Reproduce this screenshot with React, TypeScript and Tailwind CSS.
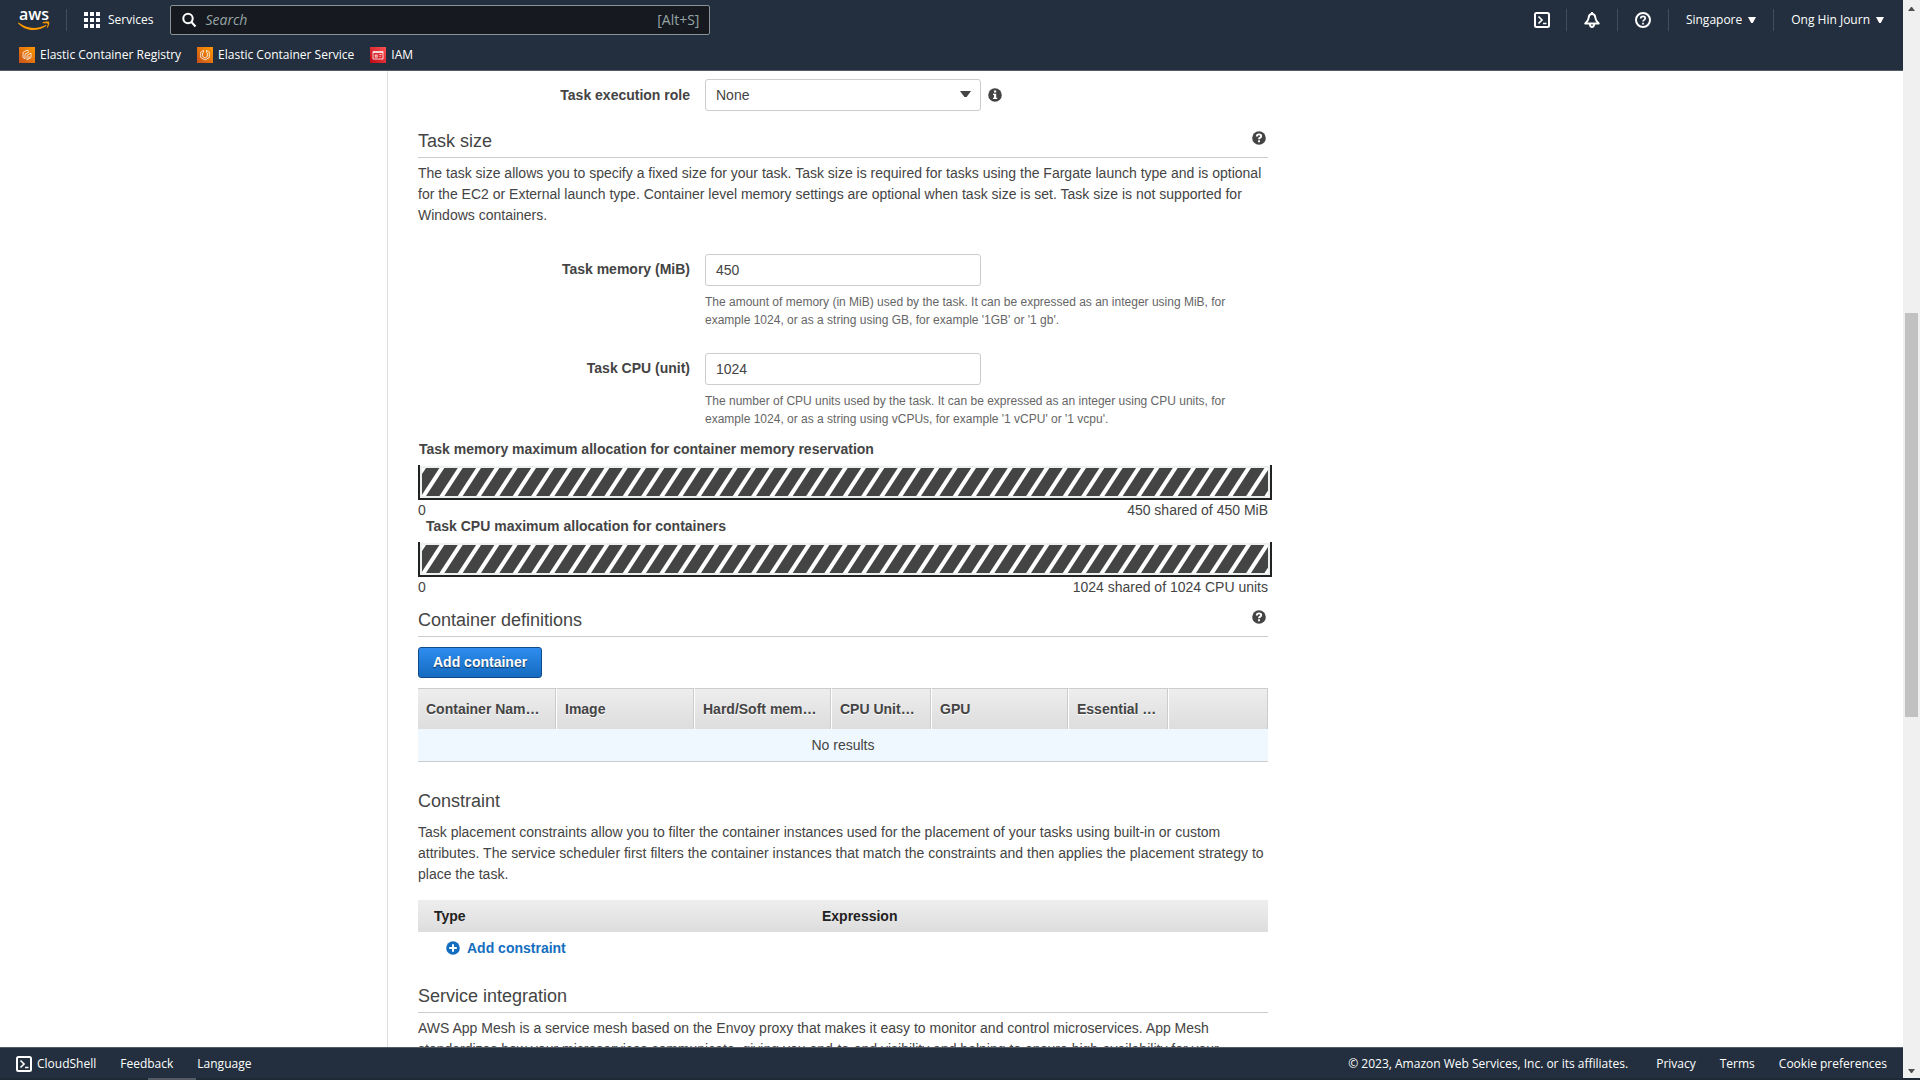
import React from "react";

const body = "text-sm leading-[21px] text-[#444]";

function Caret({ className }: { className: string }) {
  return (
    <svg viewBox="0 0 8 6" preserveAspectRatio="none" className={className} aria-hidden="true">
      <path d="M0 0h8L4.800 6H3.200z" fill="currentColor" />
    </svg>
  );
}

function AwsLogo() {
  return (
    <svg viewBox="0 0 32 32" className="size-8" role="img" aria-label="aws">
      <text x="16" y="20" textAnchor="middle" fontSize="16" fontWeight="600" fill="#fff" fontFamily="'Open Sans', sans-serif">
        aws
      </text>
      <g transform="translate(0 9)">
        <path d="M.6 13.600C5 17.200 10.300 19 15.600 19c4 0 8.300-1 12-2.900.6-.3 1.100.4.5.8C24.600 19.700 19.900 21 15.500 21 9.600 21 4.200 18.600.2 14.400c-.4-.4 0-1 .4-.8z" fill="#f90" />
        <path d="M24.600 13.500c1.500-1 5.900-1.400 6.500-.6.6.8-.2 4.600-2.100 6.200-.3.2-.6.1-.4-.2.500-1.100 1.500-3.700 1.100-4.200-.5-.6-3.500-.5-4.900-.5-.4 0-.5-.4-.2-.7z" fill="#f90" />
      </g>
    </svg>
  );
}

function AppsIcon() {
  return (
    <svg viewBox="0 0 16 16" className="size-4" fill="#fff" aria-hidden="true">
      {[0, 6, 12].map((y) => [0, 6, 12].map((x) => <rect key={`${x}-${y}`} x={x} y={y} width="4" height="4" />))}
    </svg>
  );
}

function SearchIcon() {
  return (
    <svg viewBox="0 0 16 16" className="size-4" fill="none" stroke="#fff" strokeWidth="2" aria-hidden="true">
      <circle cx="7" cy="6.500" r="4.700" />
      <path d="M10.400 10 14.500 14.500" />
    </svg>
  );
}

function ShellIcon() {
  return (
    <svg viewBox="0 0 16 16" className="size-4" fill="none" stroke="#fff" strokeWidth="2" aria-hidden="true">
      <rect x="1" y="1" width="14" height="14" rx="1.500" />
      <path d="m4.500 4.500 3.500 3.500-3.500 3.500M9 11.500h3.500" strokeWidth="1.700" />
    </svg>
  );
}

function BellIcon() {
  return (
    <svg viewBox="0 0 16 16" className="size-4" fill="none" stroke="#fff" strokeWidth="2" strokeLinejoin="round" aria-hidden="true">
      <path d="M8 2C5.800 2 4.800 3.500 4.600 6 4.400 8.500 3 10 1.300 11.500h13.400C13 10 11.600 8.500 11.400 6 11.200 3.500 10.200 2 8 2z" />
      <path d="M5.800 12c.2 1.900 1 3 2.200 3s2-1.100 2.200-3" />
      <path d="M8 0v2" />
    </svg>
  );
}

function HelpIcon() {
  return (
    <svg viewBox="0 0 16 16" className="size-4" fill="none" stroke="#fff" strokeWidth="2" aria-hidden="true">
      <circle cx="8" cy="8" r="7" />
      <path d="M5.700 6.500C5.700 5 6.700 4.300 8 4.300s2.300.8 2.300 2c0 1.500-2.300 1.600-2.300 3.300M8 10.700v1.700" strokeWidth="1.700" />
    </svg>
  );
}

function ServiceIcon({ kind }: { kind: "ecr" | "ecs" | "iam" }) {
  const red = kind === "iam";
  return (
    <svg viewBox="0 0 16 16" className="size-4" fill="none" stroke="#fff" strokeWidth=".8" aria-hidden="true">
      <defs>
        <linearGradient id={`g-${kind}`} x1="0" y1="1" x2="1" y2="0">
          <stop offset="0" stopColor={red ? "#bd0816" : "#c8511b"} />
          <stop offset="1" stopColor={red ? "#ff5252" : "#f90"} />
        </linearGradient>
      </defs>
      <rect width="16" height="16" fill={`url(#g-${kind})`} stroke="none" />
      {kind === "ecr" && (
        <path d="M10 4.300 8 3.200 4 5.500v5l2 1.200V7.200l4-2.300M8 12.800V8.300l4-2.300v4.500l-4 2.300M10 11.500V9" />
      )}
      {kind === "ecs" && (
        <path d="M6.500 3.300 3.700 5.200v5.300L8 13l4.300-2.500V5.200L9.500 3.300M6.500 3.300v2L5.600 6v3.500L8 11l2.400-1.500V6l-.9-.7v-2" />
      )}
      {kind === "iam" && <path d="M3 4.500h10v7.500H3zM3 5.500h10M5.200 8h2v2.200h-2zM9.500 7.500h2M9.500 9.500h1" />}
    </svg>
  );
}

function Disc({ kind, className }: { kind: "info" | "help" | "plus"; className: string }) {
  return (
    <svg viewBox="0 0 14 14" className={className} aria-hidden="true">
      <circle cx="7" cy="7" r="6.800" fill="currentColor" />
      {kind === "info" && <path d="M6 2.500h2.200v1.900H6zM5 5.700h3.200v4h1V11H5V9.700h1V7H5z" fill="#fff" />}
      {kind === "help" && (
        <path d="M4.800 5.500C4.800 4.200 5.700 3.400 7 3.400s2.200.7 2.200 1.800c0 1.500-2.200 1.400-2.200 3M7 9.300v1.900" fill="none" stroke="#fff" strokeWidth="1.900" />
      )}
      {kind === "plus" && <path d="M7 3.200v7.600M3.200 7h7.600" stroke="#fff" strokeWidth="2" />}
    </svg>
  );
}

const Sep = () => <span className="h-[22px] w-px bg-[#414d5c]" />;

function Header() {
  return (
    <header className="border-b border-[#545b64] bg-[#232f3e] font-['Open_Sans',sans-serif] text-xs font-medium text-white">
      <div className="flex h-10 items-center">
        <a href="#home" className="ml-[18px] pb-2"><AwsLogo /></a>
        <span className="ml-4 flex"><Sep /></span>
        <button className="ml-[17px] flex items-center gap-2"><AppsIcon />Services</button>
        <label className="ml-[17px] flex h-[30px] w-[540px] items-center rounded-xs border border-[#879596] bg-[#16191f] pr-[10px] pl-[10px] text-sm font-normal text-[#95a5a6]">
          <SearchIcon />
          <input aria-label="Search" placeholder="Search" className="ml-2 min-w-0 flex-1 italic outline-none placeholder:text-[#95a5a6]" />
          <span>[Alt+S]</span>
        </label>
        <div className="ml-auto flex items-center">
          <button aria-label="CloudShell" className="mr-4"><ShellIcon /></button>
          <Sep />
          <button aria-label="Notifications" className="mx-[17px]"><BellIcon /></button>
          <Sep />
          <button aria-label="Help" className="mx-[17px]"><HelpIcon /></button>
          <Sep />
          <button className="mx-[17px] flex items-center gap-[6px]">Singapore<Caret className="h-[6px] w-2" /></button>
          <Sep />
          <button className="mr-[19px] ml-[17px] flex items-center gap-[6px]">Ong Hin Journ<Caret className="h-[6px] w-2" /></button>
        </div>
      </div>
      <nav className="flex h-[30px] items-center gap-4 pl-[19px]">
        <a href="#ecr" className="flex items-center gap-[5px]"><ServiceIcon kind="ecr" />Elastic Container Registry</a>
        <a href="#ecs" className="flex items-center gap-[5px]"><ServiceIcon kind="ecs" />Elastic Container Service</a>
        <a href="#iam" className="flex items-center gap-[5px]"><ServiceIcon kind="iam" />IAM</a>
      </nav>
    </header>
  );
}

function SectionTitle({ children, help = false }: { children: React.ReactNode; help?: boolean }) {
  return (
    <div className="flex h-8 items-start justify-between border-b border-[#ccc] pr-[2px] text-[#444]">
      <h2 className="text-lg leading-[30px]">{children}</h2>
      {help && (
        <button aria-label={`Help: ${children}`} className="mt-[5px]"><Disc kind="help" className="size-[14px]" /></button>
      )}
    </div>
  );
}

function Field({ id, label, value, help }: { id: string; label: string; value: string; help: string }) {
  return (
    <div className="flex">
      <label htmlFor={id} className="w-[272px] text-right text-sm leading-[30px] font-bold text-[#444]">{label}</label>
      <div className="ml-[15px] flex-1">
        <input id={id} defaultValue={value} className="h-8 w-[276px] rounded-[3px] border border-[#ccc] px-[10px] text-sm text-[#444]" />
        <p className="mt-[7px] max-w-[540px] text-xs leading-[18px] text-[#666]">{help}</p>
      </div>
    </div>
  );
}

function Allocation({ id, label, total }: { id: string; label: React.ReactNode; total: string }) {
  return (
    <div className="text-sm text-[#444]">
      {label}
      <div className="-mr-1 h-[35px] border-x-2 border-b-2 border-[#222] pt-px">
        <div className="h-8 border-2 border-[#ecf0f1]">
          <svg className="block h-full w-full" aria-hidden="true">
            <defs>
              <pattern id={id} width="55" height="28" patternUnits="userSpaceOnUse">
                <rect width="55" height="28" fill="#444" />
                <g fill="#fff">
                  <path d="M-.9 0h4.900L-14.300 28h-4.900z" />
                  <path d="M17.430 0h4.900L4 28H-.9z" />
                  <path d="M35.770 0h4.900L22.330 28h-4.900z" />
                  <path d="M54.100 0H59L40.670 28h-4.900z" />
                  <path d="M72.430 0h4.900L59 28h-4.900z" />
                </g>
              </pattern>
            </defs>
            <rect width="100%" height="100%" fill={`url(#${id})`} />
          </svg>
        </div>
      </div>
      <div className="flex justify-between leading-5"><span>0</span><span>{total}</span></div>
    </div>
  );
}

const columns = [
  { name: "Container Nam…", width: "w-[138px]" },
  { name: "Image", width: "w-[138px]" },
  { name: "Hard/Soft mem…", width: "w-[137px]" },
  { name: "CPU Unit…", width: "w-[100px]" },
  { name: "GPU", width: "w-[137px]" },
  { name: "Essential …", width: "w-[100px]" },
  { name: "", width: "w-[100px]" },
];

function ContainerTable() {
  return (
    <table className="mt-[10px] w-full table-fixed border-separate border-spacing-0 text-sm text-[#444]">
      <thead>
        <tr className="h-[41px] bg-linear-to-b from-[#eee] to-[#ddd]">
          {columns.map((c) => (
            <th
              key={c.name}
              className={`${c.width} border-t border-r border-l border-t-[#ccc] border-r-[#ccc] border-l-white pl-2 text-left whitespace-nowrap text-shadow-[0_1px_0_#fff] first:border-l-0`}
            >
              {c.name}
            </th>
          ))}
        </tr>
      </thead>
      <tbody>
        <tr className="h-[33px] bg-[#f0f8ff]">
          <td colSpan={7} className="border-b border-[#ccc] text-center">No results</td>
        </tr>
      </tbody>
    </table>
  );
}

function Main() {
  return (
    <main className="flex min-h-0 flex-1 overflow-hidden bg-white font-['Liberation_Sans',Arial,sans-serif]">
      <aside className="w-[387px] shrink-0" />
      <div className="flex-1 border-l border-[#ddd] pl-[30px]">
        <div className="w-[850px] pt-2">
          <div className="flex items-center">
            <label htmlFor="role" className="w-[272px] text-right text-sm font-bold text-[#444]">Task execution role</label>
            <div className="relative ml-[15px]">
              <select id="role" className="block h-8 w-[276px] appearance-none rounded-[3px] border border-[#ccc] bg-white px-[10px] text-sm text-[#444]">
                <option>None</option>
              </select>
              <Caret className="pointer-events-none absolute top-3 right-[10px] h-[6px] w-[11px] text-[#444]" />
            </div>
            <button aria-label="About the task execution role" className="ml-[7px]"><Disc kind="info" className="size-[14px] text-[#444]" /></button>
          </div>

          <div className="mt-[15px]"><SectionTitle help>Task size</SectionTitle></div>
          <p className={`${body} mt-[5px]`}>
            The task size allows you to specify a fixed size for your task. Task size is required for tasks using the Fargate launch type and is optional for the EC2 or External launch type. Container level memory settings are optional when task size is set. Task size is not supported for Windows containers.
          </p>

          <div className="mt-7 flex flex-col gap-6">
            <Field
              id="memory"
              label="Task memory (MiB)"
              value="450"
              help="The amount of memory (in MiB) used by the task. It can be expressed as an integer using MiB, for example 1024, or as a string using GB, for example '1GB' or '1 gb'."
            />
            <Field
              id="cpu"
              label="Task CPU (unit)"
              value="1024"
              help="The number of CPU units used by the task. It can be expressed as an integer using CPU units, for example 1024, or as a string using vCPUs, for example '1 vCPU' or '1 vcpu'."
            />
          </div>

          <div className="mt-[11px]">
            <Allocation
              id="memory-hatch"
              label={<h3 className="pb-[6px] pl-px leading-5 font-bold">Task memory maximum allocation for container memory reservation</h3>}
              total="450 shared of 450 MiB"
            />
            <Allocation
              id="cpu-hatch"
              label={<h3 className="pb-[10px] pl-2 leading-3 font-bold">Task CPU maximum allocation for containers</h3>}
              total="1024 shared of 1024 CPU units"
            />
          </div>

          <div className="mt-2"><SectionTitle help>Container definitions</SectionTitle></div>
          <button className="mt-[10px] block h-[31px] rounded-[3px] border border-[#0f4a8a] bg-linear-to-b from-[#2e8def] to-[#146bc0] px-[14px] pb-[2px] text-sm font-bold text-white text-shadow-[0_1px_1px_rgba(0,0,0,0.6)]">
            Add container
          </button>
          <ContainerTable />

          <h2 className="mt-[23px] text-lg leading-8 text-[#444]">Constraint</h2>
          <p className={`${body} mt-[5px]`}>
            Task placement constraints allow you to filter the container instances used for the placement of your tasks using built-in or custom attributes. The service scheduler first filters the container instances that match the constraints and then applies the placement strategy to place the task.
          </p>
          <table className="mt-[15px] w-full table-fixed text-sm text-[#222]">
            <thead>
              <tr className="h-8 bg-linear-to-b from-[#eee] to-[#ddd] text-left">
                <th className="w-[388px] pl-4">Type</th>
                <th className="pl-4">Expression</th>
              </tr>
            </thead>
          </table>
          <button className="mt-[6px] ml-7 flex h-5 items-center gap-[7px] text-sm font-bold text-[#146ebf]">
            <Disc kind="plus" className="size-[14px]" />Add constraint
          </button>

          <div className="mt-[23px]"><SectionTitle>Service integration</SectionTitle></div>
          <p className={`${body} mt-[5px]`}>
            AWS App Mesh is a service mesh based on the Envoy proxy that makes it easy to monitor and control microservices. App Mesh standardizes how your microservices communicate, giving you end-to-end visibility and helping to ensure high-availability for your applications.
          </p>
        </div>
      </div>
    </main>
  );
}

function Footer() {
  return (
    <footer className="flex h-[31px] shrink-0 items-center border-t border-[#545b64] bg-[#232f3e] pt-[2px] pr-4 pl-4 font-['Open_Sans',sans-serif] text-xs font-medium text-white">
      <button className="flex items-center gap-[5px]"><ShellIcon />CloudShell</button>
      <a href="#feedback" className="ml-6">Feedback</a>
      <button className="ml-6">Language</button>
      <span className="ml-auto">© 2023, Amazon Web Services, Inc. or its affiliates.</span>
      <a href="#privacy" className="ml-7">Privacy</a>
      <a href="#terms" className="ml-6">Terms</a>
      <button className="ml-6">Cookie preferences</button>
    </footer>
  );
}

function Scrollbar() {
  return (
    <div className="flex w-[17px] flex-col items-center bg-[#f0f0f0] text-[#505050]">
      <svg viewBox="0 0 17 17" className="size-[17px]" aria-hidden="true"><path d="M5 11h7L9 7H8z" fill="currentColor" /></svg>
      <div className="flex-[296]" />
      <div className="w-[13px] flex-[404] bg-[#c1c1c1]" />
      <div className="flex-[344]" />
      <svg viewBox="0 0 17 17" className="size-[17px]" aria-hidden="true"><path d="M5 8h7l-3 4H8z" fill="currentColor" /></svg>
    </div>
  );
}

export default function App() {
  return (
    <div className="flex h-screen flex-col overflow-hidden bg-white">
      <div className="flex min-h-0 flex-1">
        <div className="flex min-w-0 flex-1 flex-col">
          <Header />
          <Main />
          <Footer />
        </div>
        <Scrollbar />
      </div>
      <div className="h-[2px] shrink-0 bg-[#1f2a37] pl-[148px]"><div className="h-full w-12 bg-[#545b64]" /></div>
    </div>
  );
}
